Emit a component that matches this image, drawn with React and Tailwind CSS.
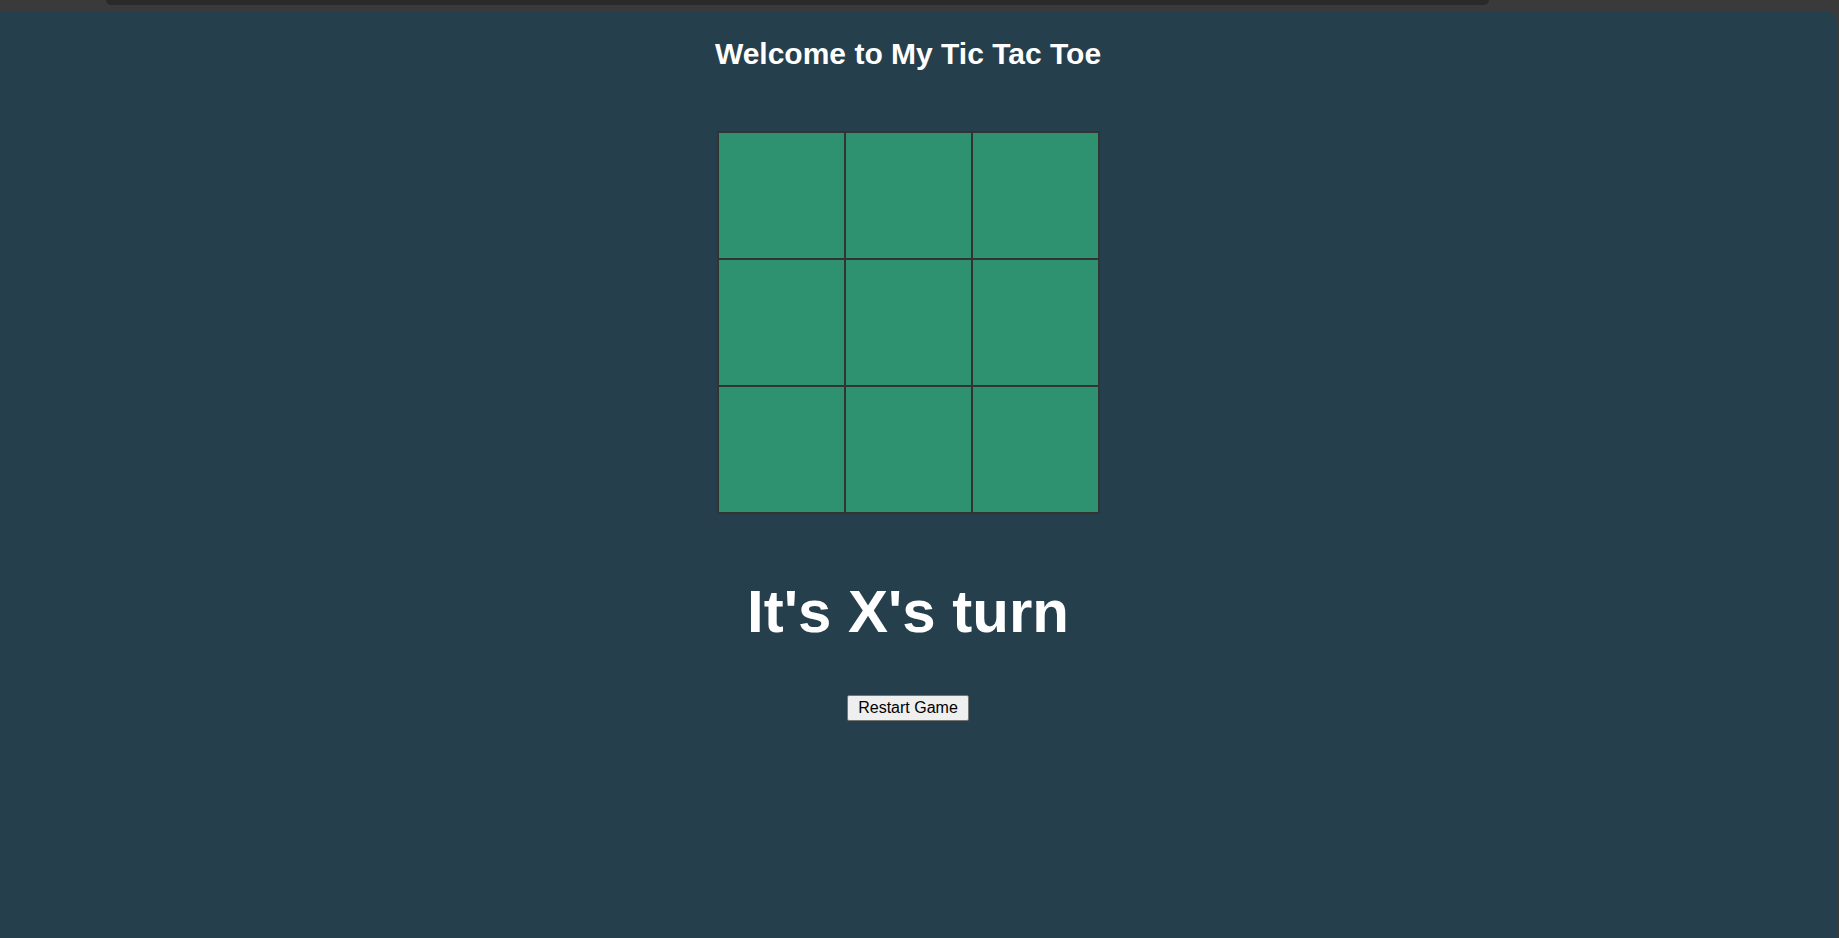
const cells = Array.from({ length: 9 });

const Board = () => {
  return (
    <div className="mt-[60px] grid grid-cols-3 gap-[2px] bg-[#333333] p-[2px]">
      {cells.map((_, i) => (
        <div key={i} className="h-[125px] w-[125px] bg-[#2e9270]" />
      ))}
    </div>
  );
};

export default function App() {
  return (
    <div className="flex h-screen w-full flex-col bg-[#3a3a3a] font-['Liberation_Sans',Arial,sans-serif]">
      <div className="h-[11px] shrink-0">
        <div className="ml-[106px] h-[5px] w-[1383px] rounded-b-[8px] bg-[#2a2a2a]" />
      </div>
      <main className="mr-[2px] flex flex-1 flex-col items-center rounded-tr-[10px] bg-[#263f4c] pr-[21px] pt-[25px]">
        <h1 className="text-[30px] font-bold leading-[35px] text-white">Welcome to My Tic Tac Toe</h1>
        <Board />
        <p className="mt-[63px] text-[60px] font-bold leading-[69px] text-white">It's X's turn</p>
        <button className="mt-[49px] h-[26px] rounded-[2px] border border-[#767676] bg-[#efefef] px-[10px] text-[16px] leading-[18px] text-black">
          Restart Game
        </button>
      </main>
    </div>
  );
}
